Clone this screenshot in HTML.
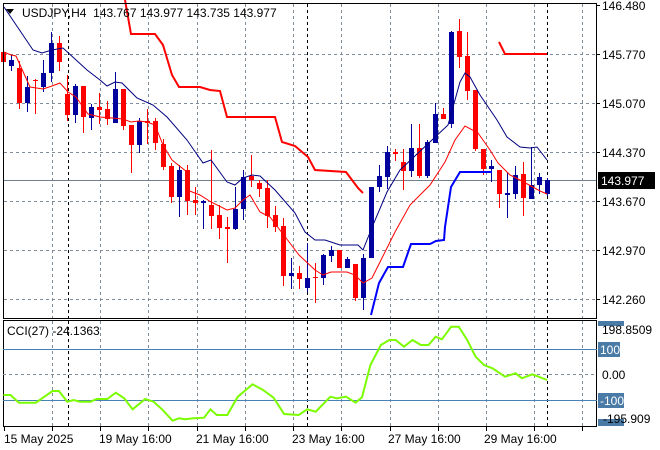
<!DOCTYPE html>
<html><head><meta charset="utf-8"><style>
html,body{margin:0;padding:0;background:#fff;width:660px;height:450px;overflow:hidden}
svg{display:block;font-family:"Liberation Sans",sans-serif}
</style></head><body>
<svg id="s" width="660" height="450" viewBox="0 0 660 450" xmlns="http://www.w3.org/2000/svg">
<rect width="660" height="450" fill="#fff"/>
<g id="grid" stroke="#7f8c99" stroke-width="1" stroke-dasharray="3,3" fill="none"></g>
<g id="vb" stroke="#000" stroke-width="1" stroke-dasharray="3,3"></g>
<line x1="3" y1="180.5" x2="597" y2="180.5" stroke="#708090"/>
<g id="c"></g>
<polyline fill="none" stroke="#000080" stroke-width="1" points="4,7 33,50 42,53 52,50 63,48 87,70 100,80 107,86 115,82 122,83 137,98 153,105 167,117 187,140 203,163 211,160 227,182 235,185 243,178 252,175 260,176 275,190 295,213 305,232 315,240 325,240 334,243 340,245 358,245 363,250 373,225 387,192 400,170 448,125 460,82 465,73 470,77 480,95 497,120 507,137 520,147 530,148 537,147 547,160"/>
<polyline fill="none" stroke="#ff0000" stroke-width="1" points="4,52 11,55 16,56 30,87 43,89 52,86 60,83 68,92 76,97 88,114 100,117 112,118 123,119 131,122 139,121 147,122 155,125 163,145 172,160 187,172 187,190 200,195 211,202 227,210 235,208 243,200 250,195 260,212 270,217 283,234 299,255 315,270 323,275 331,272 347,272 355,275 363,283 372,278 380,262 395,232 410,205 430,185 445,162 455,140 465,126 478,133 490,150 498,163 510,175 520,180 540,191 547,194"/>
<polyline fill="none" stroke="#ff0000" stroke-width="2" points="125,0 131,34 155,34 163,45 172,75 179,87 200,87 210,90 220,91 227,117 275,117 282,142 295,146 308,157 315,170 346,172 352,180 358,188 363,193"/>
<polyline fill="none" stroke="#ff0000" stroke-width="2" points="499,42 505,54 547,54"/>
<polyline fill="none" stroke="#0000ff" stroke-width="2" points="371,315 379,283 388,267 403,267 411,244 430,244 436,241 444,240 445,227 451,187 460,172 492,172"/>
<rect x="3.5" y="3.5" width="593" height="315" fill="none" stroke="#000"/>
<rect x="3.5" y="320.5" width="593" height="106" fill="none" stroke="#000"/>
<polygon points="6,9 14,9 10,14" fill="#000"/>
<text x="22" y="17" font-size="12" fill="#000" xml:space="preserve">USDJPY,H4  143.767 143.977 143.735 143.977</text>
<g font-size="12" fill="#000">
<text x="602" y="10">146.480</text>
<text x="602" y="59">145.770</text>
<text x="602" y="108">145.070</text>
<text x="602" y="157">144.370</text>
<text x="602" y="206">143.670</text>
<text x="602" y="255">142.970</text>
<text x="602" y="304">142.260</text>
</g>
<g stroke="#000"><line x1="597" y1="5.5" x2="600" y2="5.5"/><line x1="597" y1="54.5" x2="600" y2="54.5"/><line x1="597" y1="103.5" x2="600" y2="103.5"/><line x1="597" y1="152.5" x2="600" y2="152.5"/><line x1="597" y1="201.5" x2="600" y2="201.5"/><line x1="597" y1="250.5" x2="600" y2="250.5"/><line x1="597" y1="299.5" x2="600" y2="299.5"/></g>
<rect x="598" y="172" width="57" height="17" fill="#000"/>
<text x="601" y="185" font-size="12" fill="#fff">143.977</text>
<line x1="3" y1="349.5" x2="597" y2="349.5" stroke="#4682b4"/>
<line x1="3" y1="400.5" x2="597" y2="400.5" stroke="#4682b4"/>
<line x1="3" y1="374.5" x2="597" y2="374.5" stroke="#7f8c99" stroke-dasharray="3,3"/>
<polyline id="cci" fill="none" stroke="#7cfc00" stroke-width="2" points=""/>
<text x="7" y="335" font-size="12" fill="#000">CCI(27) -24.1363</text>
<rect x="598" y="321" width="26" height="5" fill="#4a7aa6"/>
<text x="602" y="334" font-size="12" fill="#000">198.8509</text>
<rect x="598" y="342" width="22" height="15" fill="#4a7aa6"/>
<text x="600" y="354" font-size="12" fill="#fff">100</text>
<text x="602" y="379" font-size="12" fill="#000">0.00</text>
<rect x="598" y="393" width="26" height="15" fill="#4a7aa6"/>
<text x="600" y="405" font-size="12" fill="#fff">-100</text>
<rect x="598" y="419" width="26" height="7" fill="#4a7aa6"/>
<text x="603" y="423" font-size="12" fill="#000">-195.909</text>
<g font-size="12" fill="#000">
<text x="4" y="443">15 May 2025</text>
<text x="99" y="443">19 May 16:00</text>
<text x="196" y="443">21 May 16:00</text>
<text x="292" y="443">23 May 16:00</text>
<text x="388" y="443">27 May 16:00</text>
<text x="484" y="443">29 May 16:00</text>
</g>
<g id="ticks" stroke="#000"></g>
</svg>
<script>
var NS="http://www.w3.org/2000/svg";
function el(p,t,a){var e=document.createElementNS(NS,t);for(var k in a)e.setAttribute(k,a[k]);p.appendChild(e);return e;}
var g=document.getElementById('grid'),vb=document.getElementById('vb'),tk=document.getElementById('ticks');
[54,103,152,201,250,299].forEach(function(y){el(g,'line',{x1:4,y1:y+.5,x2:596,y2:y+.5});});
var gx=[52,100,148,197,245,293,341,390,438,486,534,582];
gx.forEach(function(x){el(g,'line',{x1:x+.5,y1:4,x2:x+.5,y2:318});el(g,'line',{x1:x+.5,y1:321,x2:x+.5,y2:426});});
[68,307,547].forEach(function(x){el(vb,'line',{x1:x+.5,y1:4,x2:x+.5,y2:318});el(vb,'line',{x1:x+.5,y1:321,x2:x+.5,y2:426});});
[4,52,100,148,197,245,293,341,390,438,486,534,582].forEach(function(x){el(tk,'line',{x1:x+.5,y1:427,x2:x+.5,y2:431});});
var R='#ff0000',B='#00009c';
var c=[
[3,R,52,62,36,81],[11,B,60,66,55,71],[19,R,68,103,61,109],[27,B,87,103,76,112],[35,R,80,81,79,114],[43,B,73,87,60,92],
[51,B,43,73,32,82],[59,R,43,62,36,71],[67,R,94,115,75,121],[75,B,86,115,84,123],[83,R,86,117,86,133],[91,B,107,118,104,130],
[99,R,107,110,93,124],[107,R,109,119,101,125],[115,B,89,123,72,123],[123,R,89,126,89,130],[131,R,125,145,125,173],[139,B,121,145,118,153],
[147,R,121,123,109,144],[155,R,121,143,118,150],[163,R,144,167,139,170],[171,R,166,197,163,203],[179,B,170,197,165,217],[187,R,170,201,165,215],
[195,R,200,203,187,215],[203,B,201,203,200,229],[211,R,205,216,150,229],[219,R,215,228,205,239],[227,R,227,229,217,263],[235,B,209,229,187,230],
[243,B,177,209,170,220],[251,R,176,180,155,187],[259,R,183,189,180,197],[267,R,188,216,180,228],[275,R,215,227,206,232],[283,R,226,276,218,286],
[291,B,273,276,258,289],[299,R,273,279,266,289],[307,B,278,288,243,292],[315,R,277,278,263,303],[323,B,255,278,254,285],[331,B,250,256,246,262],
[339,R,250,268,250,268],[347,B,259,268,257,268],[355,R,264,298,264,301],[363,B,258,298,254,310],[371,B,187,258,187,258],[379,B,176,187,165,192],
[387,B,152,177,146,189],[395,R,152,154,149,161],[403,R,162,171,149,190],[411,B,148,171,124,177],[419,R,148,176,124,178],[427,B,142,176,140,178],
[435,B,114,143,103,143],[443,R,114,119,108,119],[451,B,32,124,31,128],[459,R,31,57,19,68],[467,R,56,91,32,100],[475,R,90,149,90,151],
[483,R,149,169,149,175],[491,B,166,169,160,182],[499,R,170,194,170,208],[507,B,193,195,172,218],[515,B,175,194,166,199],[523,R,174,198,162,216],
[531,B,185,199,147,199],[539,B,177,185,173,194],[547,B,180,194,178,196]];
var cg=document.getElementById('c');
c.forEach(function(d){el(cg,'line',{x1:d[0]+.5,y1:d[4],x2:d[0]+.5,y2:d[5],stroke:d[1]});
var h=Math.max(1,d[3]-d[2]);el(cg,'rect',{x:d[0]-2,y:d[2],width:5,height:h,fill:d[1]});});
var p=[[8,255],[25,255],[45,278],[85,278],[100,265],[125,243],[140,243],[160,275],[175,270],[190,275],[215,275],[230,267],[255,267],[275,248],[295,265],[315,298],[345,267],[365,275],[385,298],[410,332],[425,325],[440,328],[460,325],[485,323],[500,298],[515,315],[540,315],[565,260],[600,223],[625,240],[650,263],[675,312],[710,315],[730,298],[750,305],[785,260],[800,265],[822,260],[845,278],[860,262],[880,165],[905,105],[925,90],[940,90],[960,110],[980,90],[1000,105],[1018,105],[1035,80],[1050,88],[1072,50],[1090,50],[1110,90],[1130,140],[1150,165],[1170,175],[1200,200],[1225,190],[1240,205],[1265,193],[1300,210]];
document.getElementById('cci').setAttribute('points',p.map(function(q){return (q[0]/2.376).toFixed(1)+','+(310+q[1]/3).toFixed(1);}).join(' '));
</script>
</body></html>
